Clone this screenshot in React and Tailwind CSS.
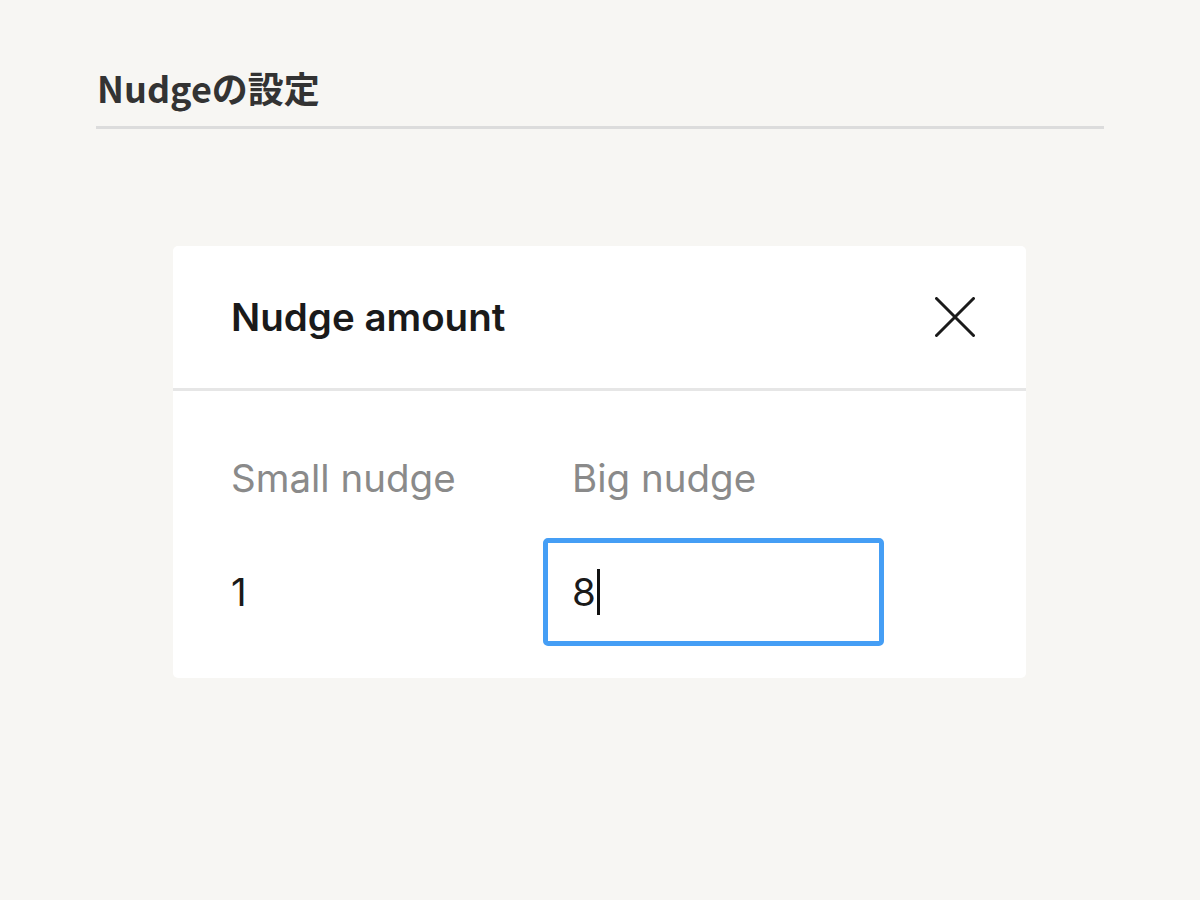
import React from 'react';

const CloseIcon = () => (
  <svg width="40" height="40" viewBox="0 0 40 40" fill="none">
    <path d="M1.5 1.5L38.5 38.5M38.5 1.5L1.5 38.5" stroke="#1a1a1a" strokeWidth="3" strokeLinecap="round" />
  </svg>
);

const NudgeDialog = () => {
  return (
    <div className="ml-[173px] mt-[117px] w-[853px] bg-white rounded-[5px] font-['Inter','Liberation_Sans',sans-serif]">
      {/* Header */}
      <div className="h-[145px] pl-[58px] pr-[51px] flex items-center justify-between border-b-[3px] border-[#e6e6e6]">
        <h3 className="text-[38.5px] font-semibold text-[#1a1a1a] leading-none">Nudge amount</h3>
        <button className="w-[40px] h-[40px] flex items-center justify-center">
          <CloseIcon />
        </button>
      </div>

      {/* Body */}
      <div className="pl-[58px] pt-[64px] pb-[32px] grid grid-cols-[312px_341px] text-[38.5px] leading-[46px]">
        <div className="text-[#8a8a8a]">Small nudge</div>
        <div className="text-[#8a8a8a] pl-[29px]">Big nudge</div>

        <div className="mt-[37px] h-[108px] flex items-center text-[#1a1a1a]">1</div>
        <div className="mt-[37px] h-[108px] border-[5px] border-[#459ef5] rounded-[5px] pl-[24px] flex items-center text-[#1a1a1a]">
          <span>8</span>
          <span className="w-[3px] h-[46px] bg-[#111] ml-[1px]" />
        </div>
      </div>
    </div>
  );
};

export default function App() {
  return (
    <div className="w-[1200px] h-[900px] bg-[#f7f6f3] overflow-hidden">
      <div className="px-[96px] pt-[64px]">
        <h2 className="text-[36px] font-bold leading-[46px] text-[#333333] pl-[1px] font-['Noto_Sans_CJK_JP','Noto_Sans',sans-serif]">
          Nudgeの設定
        </h2>
        <div className="mt-[16px] h-[3px] bg-[#dcdcdc]" />
      </div>

      <NudgeDialog />
    </div>
  );
}
